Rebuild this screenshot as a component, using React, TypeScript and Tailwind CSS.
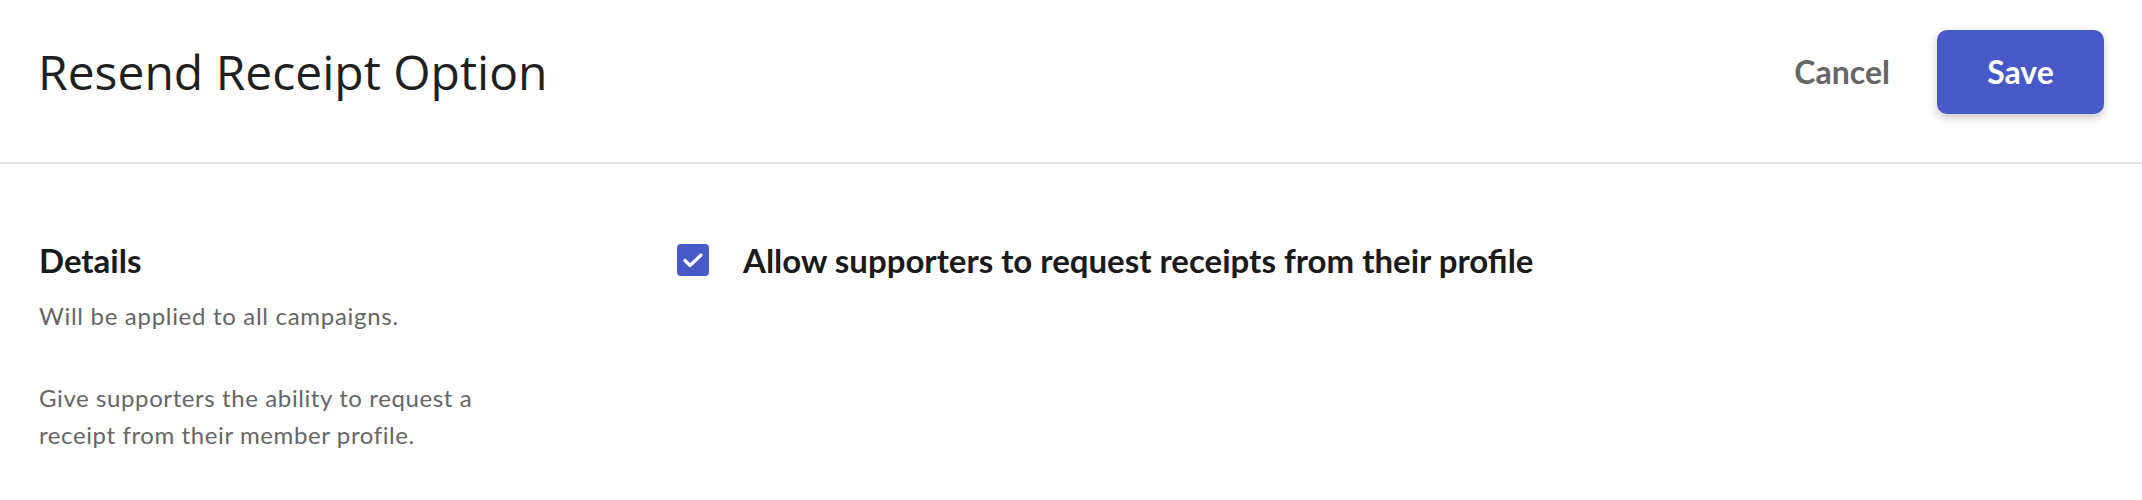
import React, { useState } from 'react';

const bodyFont = { fontFamily: 'Lato, "Noto Sans", sans-serif' };

function CheckBox({ checked, onToggle }: { checked: boolean; onToggle: () => void }) {
    return (
        <button
            onClick={onToggle}
            className={`w-[32px] h-[32px] rounded-[4px] flex items-center justify-center shrink-0 ${
                checked ? 'bg-[#4659c6]' : 'bg-white border-2 border-[#bdbdbd]'
            }`}
        >
            {checked && (
                <svg width="32" height="32" viewBox="0 0 32 32" fill="none">
                    <polyline
                        points="8,16.5 13,21.5 24,11"
                        stroke="white"
                        strokeWidth="3.2"
                        strokeLinecap="round"
                        strokeLinejoin="round"
                    />
                </svg>
            )}
        </button>
    );
}

export default function App() {
    const [allowResend, setAllowResend] = useState(true);

    return (
        <div className="min-h-screen bg-white text-[#1a1a1a]" style={bodyFont}>
            {/* Header */}
            <div className="flex items-center justify-between pl-[38px] pr-[38px] pt-[30px] pb-[48px] border-b-2 border-[#e2e2e2]">
                <h1
                    className="text-[48px] leading-[56px] font-normal text-[#1f1f1f]"
                    style={{ fontFamily: '"Open Sans", "Noto Sans", sans-serif' }}
                >
                    Resend Receipt Option
                </h1>
                <div className="flex items-center gap-[47px]">
                    <button className="text-[32px] font-bold text-[#666666]">Cancel</button>
                    <button className="w-[167px] h-[84px] rounded-[10px] bg-[#4659c6] text-white text-[32px] font-bold shadow-[0_4px_8px_rgba(0,0,0,0.22)]">
                        Save
                    </button>
                </div>
            </div>

            {/* Body */}
            <div className="flex pl-[39px] pt-[76px]">
                <div className="w-[638px] shrink-0">
                    <h2 className="text-[33px] leading-[40px] font-bold">Details</h2>
                    <p className="mt-[17px] text-[24px] leading-[37px] tracking-[0.7px] text-[#666666]">
                        Will be applied to all campaigns.
                    </p>
                    <p className="mt-[45px] w-[470px] text-[24px] leading-[37px] tracking-[0.6px] text-[#666666]">
                        Give supporters the ability to request a receipt from their member profile.
                    </p>
                </div>
                <div className="flex items-center gap-[34px] h-[40px]">
                    <CheckBox checked={allowResend} onToggle={() => setAllowResend((v) => !v)} />
                    <span className="text-[33px] leading-[40px] font-bold">
                        Allow supporters to request receipts from their profile
                    </span>
                </div>
            </div>
        </div>
    );
}
